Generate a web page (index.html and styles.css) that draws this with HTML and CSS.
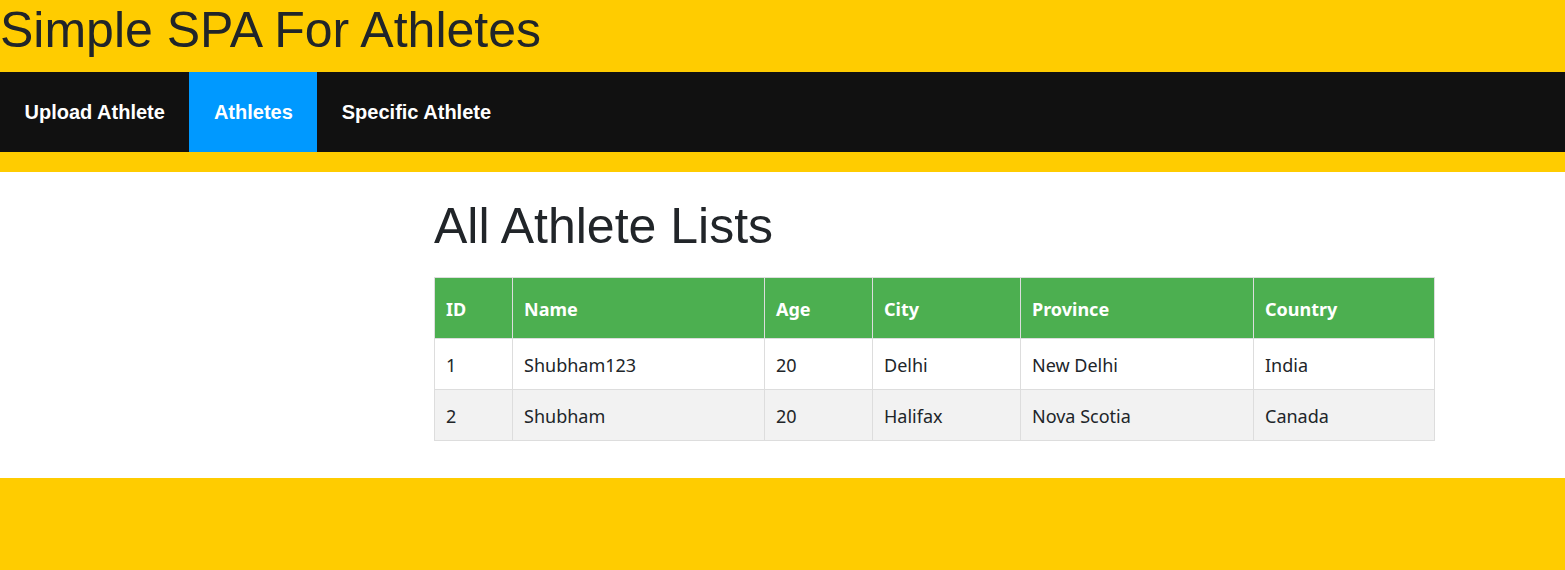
FILE: index.html
```html
<!DOCTYPE html>
<html lang="en">
<head>
<meta charset="utf-8">
<title>Simple SPA For Athletes</title>
<link rel="stylesheet" href="styles.css">
</head>
<body>
<header class="site-header">
  <h1 class="site-title">Simple SPA For Athletes</h1>
</header>
<nav class="topnav">
  <a class="nav-link" href="#">Upload Athlete</a>
  <a class="nav-link active" href="#">Athletes</a>
  <a class="nav-link" href="#">Specific Athlete</a>
</nav>
<div class="spacer"></div>
<main class="content">
  <section class="list-section">
    <h2 class="list-title">All Athlete Lists</h2>
    <table class="athletes">
      <colgroup>
        <col class="c-id">
        <col class="c-name">
        <col class="c-age">
        <col class="c-city">
        <col class="c-prov">
        <col class="c-country">
      </colgroup>
      <thead>
        <tr><th>ID</th><th>Name</th><th>Age</th><th>City</th><th>Province</th><th>Country</th></tr>
      </thead>
      <tbody>
        <tr><td>1</td><td>Shubham123</td><td>20</td><td>Delhi</td><td>New Delhi</td><td>India</td></tr>
        <tr><td>2</td><td>Shubham</td><td>20</td><td>Halifax</td><td>Nova Scotia</td><td>Canada</td></tr>
      </tbody>
    </table>
  </section>
</main>
<footer class="site-footer"></footer>
</body>
</html>
```

FILE: styles.css
```css
html, body {
  margin: 0;
  padding: 0;
}
body {
  background: #ffcc00;
  color: #212529;
  font-family: "Liberation Sans", Arial, sans-serif;
}
.site-header {
  height: 72px;
  box-sizing: border-box;
  padding-top: 0;
}
.site-title {
  margin: 0;
  font-weight: 400;
  font-size: 50px;
  line-height: 60px;
  color: #212529;
}
.topnav {
  display: flex;
  height: 80px;
  background: #111111;
}
.nav-link {
  display: block;
  padding: 0 24.5px;
  line-height: 80px;
  color: #ffffff;
  font-weight: 700;
  font-size: 20px;
  text-decoration: none;
}
.nav-link.active {
  background: #0099ff;
}
.spacer {
  height: 20px;
}
.content {
  background: #ffffff;
  padding: 24px 0 37px 434px;
}
.list-section {
  width: 1000px;
}
.list-title {
  margin: 0 0 21px 0;
  font-weight: 400;
  font-size: 50px;
  line-height: 60px;
  color: #212529;
}
.athletes {
  width: 1000px;
  border-collapse: collapse;
  table-layout: fixed;
  font-family: "Noto Sans", "Open Sans", sans-serif;
  font-size: 18px;
  line-height: 26px;
}
.c-id { width: 78px; }
.c-name { width: 252px; }
.c-age { width: 108px; }
.c-city { width: 148px; }
.c-prov { width: 233px; }
.c-country { width: 181px; }
.athletes th,
.athletes td {
  border: 1px solid #dddddd;
  text-align: left;
  padding: 0 11px;
}
.athletes th {
  background: #4caf50;
  color: #ffffff;
  font-weight: 700;
  height: 58px;
  padding-top: 2px;
}
.athletes td {
  height: 48px;
  padding-top: 2px;
}
.athletes tbody tr:nth-child(even) td {
  background: #f2f2f2;
}
.site-footer {
  height: 92px;
}
```
